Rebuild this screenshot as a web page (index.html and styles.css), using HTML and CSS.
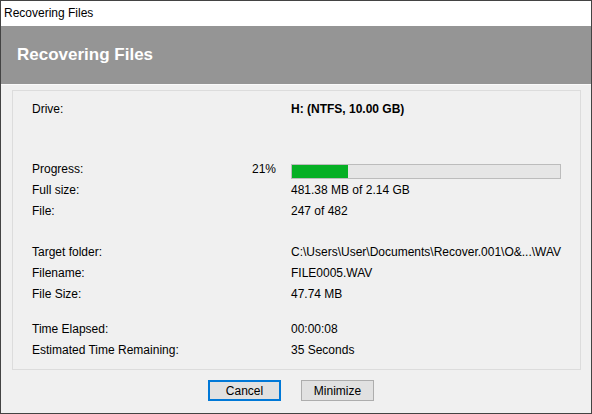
FILE: index.html
```html
<!DOCTYPE html>
<html lang="en">

<head>
  <meta charset="UTF-8">
  <title>Recovering Files</title>
  <link rel="stylesheet" href="styles.css">
</head>

<body>
  <div class="window">
    <div class="titlebar">Recovering Files</div>

    <header class="banner">
      <h1>Recovering Files</h1>
    </header>

    <div class="content">
      <div class="group">
        <div class="row">
          <span class="label">Drive:</span>
          <span class="pct"></span>
          <span class="value bold">H: (NTFS, 10.00 GB)</span>
        </div>

        <div class="row gap-lg">
          <span class="label">Progress:</span>
          <span class="pct">21%</span>
          <span class="value">
            <div class="bar"><div class="fill" style="width: 21%"></div></div>
          </span>
        </div>
        <div class="row">
          <span class="label">Full size:</span>
          <span class="pct"></span>
          <span class="value">481.38 MB of 2.14 GB</span>
        </div>
        <div class="row">
          <span class="label">File:</span>
          <span class="pct"></span>
          <span class="value">247 of 482</span>
        </div>

        <div class="row gap-md">
          <span class="label">Target folder:</span>
          <span class="pct"></span>
          <span class="value">C:\Users\User\Documents\Recover.001\O&amp;...\WAV</span>
        </div>
        <div class="row">
          <span class="label">Filename:</span>
          <span class="pct"></span>
          <span class="value">FILE0005.WAV</span>
        </div>
        <div class="row">
          <span class="label">File Size:</span>
          <span class="pct"></span>
          <span class="value">47.74 MB</span>
        </div>

        <div class="row gap-sm">
          <span class="label">Time Elapsed:</span>
          <span class="pct"></span>
          <span class="value">00:00:08</span>
        </div>
        <div class="row">
          <span class="label">Estimated Time Remaining:</span>
          <span class="pct"></span>
          <span class="value">35 Seconds</span>
        </div>
      </div>

      <div class="buttons">
        <button class="btn default">Cancel</button>
        <button class="btn">Minimize</button>
      </div>
    </div>
  </div>
</body>

</html>
```

FILE: styles.css
```css
/* Global Styles */
body {
  margin: 0;
  padding: 0;
  font-family: 'Liberation Sans', Arial, sans-serif;
  font-size: 12px;
  color: #000;
  background: #fff;
}

.window {
  width: 592px;
  height: 414px;
  box-sizing: border-box;
  border: 1px solid #434343;
  background: #f0f0f0;
  display: flex;
  flex-direction: column;
}

/* Title bar */
.titlebar {
  height: 25px;
  line-height: 24px;
  padding-left: 3px;
  background: #fff;
  font-size: 12px;
}

/* Header banner */
.banner {
  height: 58px;
  background: #959595;
  border-bottom: 1px solid #fafafa;
  display: flex;
  align-items: center;
  padding-left: 16px;
}

.banner h1 {
  margin: 0;
  font-size: 17px;
  font-weight: bold;
  color: #fff;
}

/* Content */
.content {
  flex: 1;
  padding: 5px 10px 0 11px;
}

.group {
  height: 280px;
  box-sizing: border-box;
  border: 1px solid #dcdcdc;
  padding: 8px 19px 0 19px;
}

.row {
  display: grid;
  grid-template-columns: 199px 30px 270px;
  column-gap: 15px;
  height: 21px;
  line-height: 21px;
  align-items: center;
}

.row.gap-lg {
  margin-top: 39px;
}

.row.gap-md {
  margin-top: 20px;
}

.row.gap-sm {
  margin-top: 14px;
}

.pct {
  text-align: right;
}

.value {
  white-space: nowrap;
}

.bold {
  font-weight: bold;
}

/* Progress bar */
.bar {
  height: 15px;
  box-sizing: border-box;
  border: 1px solid #bcbcbc;
  background: #e6e6e6;
  margin-top: 3px;
}

.fill {
  height: 100%;
  background: #06b025;
}

/* Buttons */
.buttons {
  display: flex;
  gap: 20px;
  padding: 10px 0 0 196px;
}

.btn {
  width: 73px;
  height: 21px;
  box-sizing: border-box;
  border: 1px solid #adadad;
  background: #e1e1e1;
  font-family: 'Liberation Sans', Arial, sans-serif;
  font-size: 12px;
  color: #000;
  padding: 0;
}

.btn.default {
  border: 2px solid #0078d7;
}
```
